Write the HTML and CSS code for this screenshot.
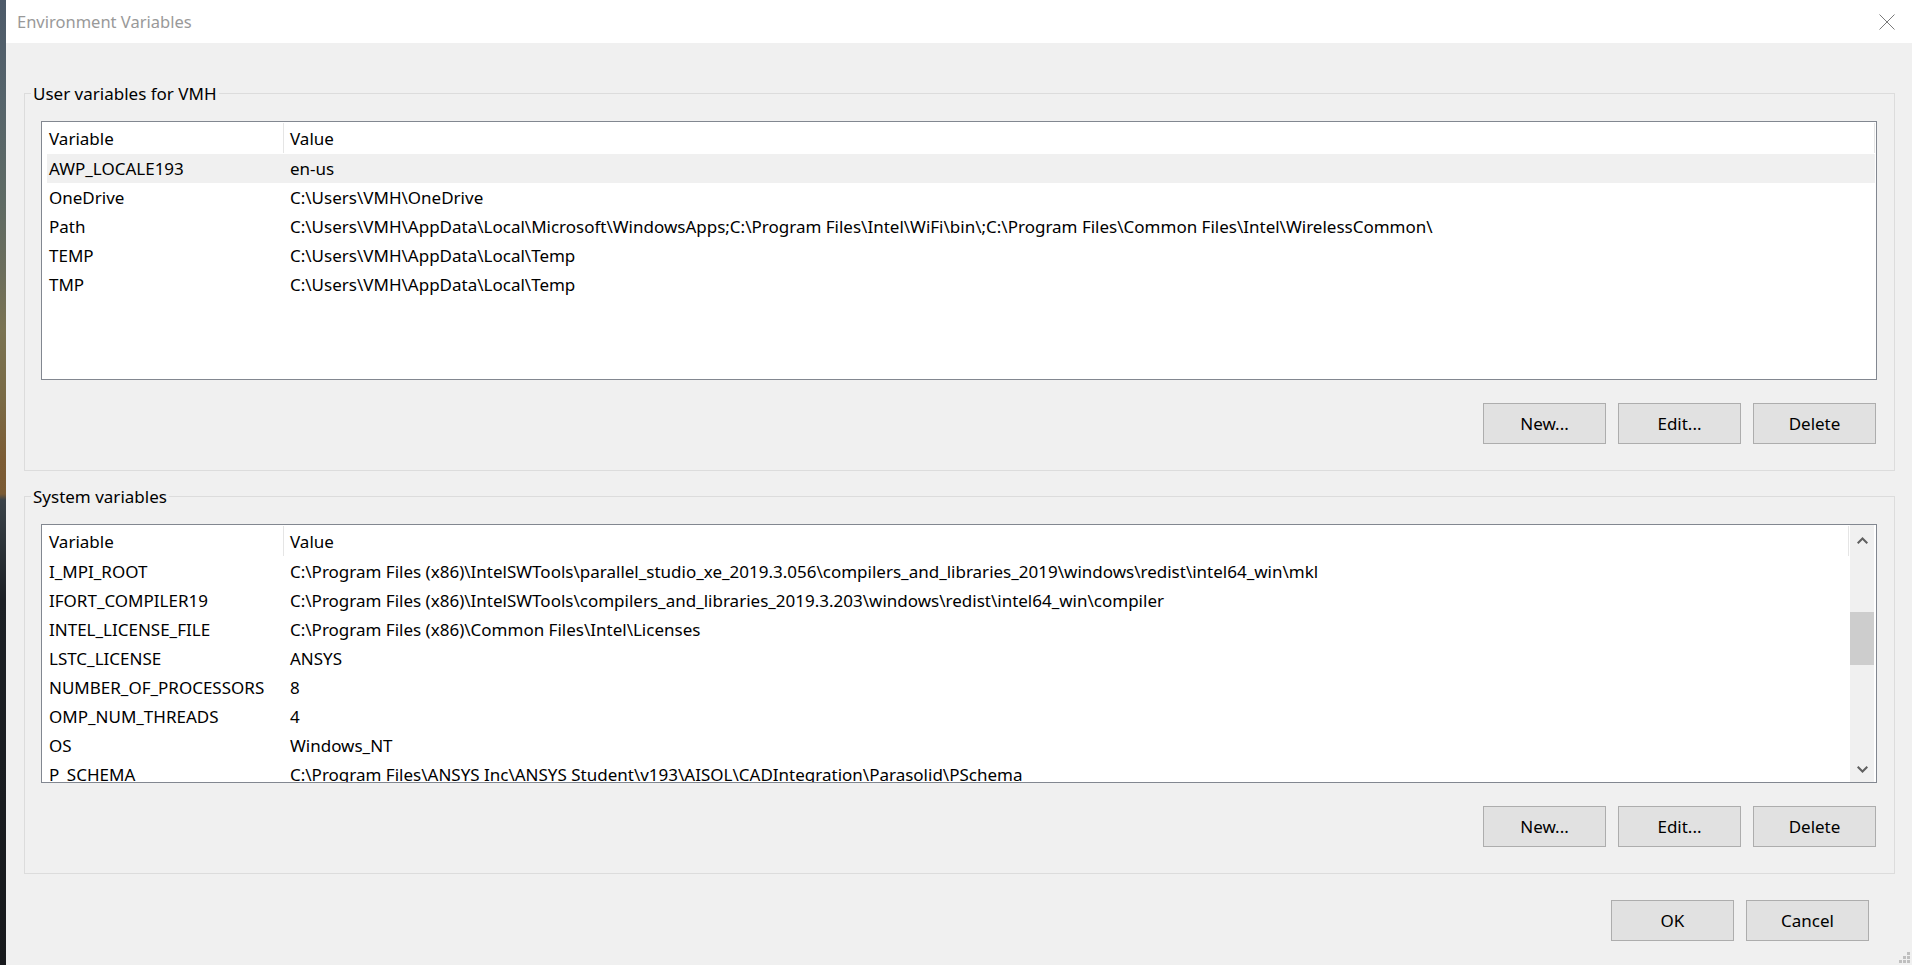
FILE: index.html
```html
<!DOCTYPE html>
<html lang="en">
<head>
  <meta charset="UTF-8" />
  <title>Environment Variables</title>
  <link rel="stylesheet" href="styles.css">
</head>
<body>

  <div class="desktop-edge"></div>

  <div class="dialog">
    <header class="titlebar">
      <span class="title">Environment Variables</span>
      <button class="close" title="Close">
        <svg width="16" height="16" viewBox="0 0 16 16"><path d="M0.5 0.5 L15.5 15.5 M15.5 0.5 L0.5 15.5" stroke="#7a7a7a" stroke-width="1" fill="none"/></svg>
      </button>
    </header>

    <main class="content">

      <section class="group">
        <h2 class="group-label">User variables for VMH</h2>
        <div class="listview">
          <div class="list-main">
            <div class="list-head">
              <div class="cell-name">Variable</div>
              <div class="cell-value">Value</div>
            </div>
            <div class="row selected"><div class="cell-name">AWP_LOCALE193</div><div class="cell-value">en-us</div></div>
            <div class="row"><div class="cell-name">OneDrive</div><div class="cell-value">C:\Users\VMH\OneDrive</div></div>
            <div class="row"><div class="cell-name">Path</div><div class="cell-value">C:\Users\VMH\AppData\Local\Microsoft\WindowsApps;C:\Program Files\Intel\WiFi\bin\;C:\Program Files\Common Files\Intel\WirelessCommon\</div></div>
            <div class="row"><div class="cell-name">TEMP</div><div class="cell-value">C:\Users\VMH\AppData\Local\Temp</div></div>
            <div class="row"><div class="cell-name">TMP</div><div class="cell-value">C:\Users\VMH\AppData\Local\Temp</div></div>
          </div>
        </div>
        <div class="btn-row">
          <button class="btn">New...</button>
          <button class="btn">Edit...</button>
          <button class="btn">Delete</button>
        </div>
      </section>

      <section class="group">
        <h2 class="group-label">System variables</h2>
        <div class="listview">
          <div class="list-main">
            <div class="list-head">
              <div class="cell-name">Variable</div>
              <div class="cell-value">Value</div>
            </div>
            <div class="row"><div class="cell-name">I_MPI_ROOT</div><div class="cell-value">C:\Program Files (x86)\IntelSWTools\parallel_studio_xe_2019.3.056\compilers_and_libraries_2019\windows\redist\intel64_win\mkl</div></div>
            <div class="row"><div class="cell-name">IFORT_COMPILER19</div><div class="cell-value">C:\Program Files (x86)\IntelSWTools\compilers_and_libraries_2019.3.203\windows\redist\intel64_win\compiler</div></div>
            <div class="row"><div class="cell-name">INTEL_LICENSE_FILE</div><div class="cell-value">C:\Program Files (x86)\Common Files\Intel\Licenses</div></div>
            <div class="row"><div class="cell-name">LSTC_LICENSE</div><div class="cell-value">ANSYS</div></div>
            <div class="row"><div class="cell-name">NUMBER_OF_PROCESSORS</div><div class="cell-value">8</div></div>
            <div class="row"><div class="cell-name">OMP_NUM_THREADS</div><div class="cell-value">4</div></div>
            <div class="row"><div class="cell-name">OS</div><div class="cell-value">Windows_NT</div></div>
            <div class="row"><div class="cell-name">P_SCHEMA</div><div class="cell-value">C:\Program Files\ANSYS Inc\ANSYS Student\v193\AISOL\CADIntegration\Parasolid\PSchema</div></div>
          </div>
          <div class="scrollbar">
            <div class="sb-btn sb-up">
              <svg width="11" height="7" viewBox="0 0 11 7"><path d="M0.7 6.3 L5.5 1.5 L10.3 6.3" stroke="#606060" stroke-width="2" fill="none"/></svg>
            </div>
            <div class="sb-track"><div class="sb-thumb"></div></div>
            <div class="sb-btn sb-down">
              <svg width="11" height="7" viewBox="0 0 11 7"><path d="M0.7 0.7 L5.5 5.5 L10.3 0.7" stroke="#606060" stroke-width="2" fill="none"/></svg>
            </div>
          </div>
        </div>
        <div class="btn-row">
          <button class="btn">New...</button>
          <button class="btn">Edit...</button>
          <button class="btn">Delete</button>
        </div>
      </section>

      <div class="dialog-buttons">
        <button class="btn">OK</button>
        <button class="btn">Cancel</button>
      </div>
    </main>

    <svg class="grip" width="11" height="11" viewBox="0 0 11 11">
      <rect x="8" y="0" width="3" height="3" fill="#bfbfbf"/>
      <rect x="4" y="4" width="3" height="3" fill="#bfbfbf"/>
      <rect x="8" y="4" width="3" height="3" fill="#bfbfbf"/>
      <rect x="0" y="8" width="3" height="3" fill="#bfbfbf"/>
      <rect x="4" y="8" width="3" height="3" fill="#bfbfbf"/>
      <rect x="8" y="8" width="3" height="3" fill="#bfbfbf"/>
    </svg>
  </div>

</body>
</html>
```

FILE: styles.css
```css
:root {
  --face: #f0f0f0;
  --group-line: #dcdcdc;
  --list-border: #828790;
  --btn-face: #e1e1e1;
  --btn-border: #adadad;
}

body {
  margin: 0;
  height: 965px;
  overflow: hidden;
  display: flex;
  font-family: 'Noto Sans', 'Segoe UI', sans-serif;
  font-size: 17px;
  color: #000;
  background: var(--face);
}

.desktop-edge {
  width: 6px;
  flex: none;
  background: linear-gradient(to bottom,
    #4d5a69 0px, #56646b 100px, #5e6a64 200px, #6b6d5c 270px,
    #7a7352 330px, #7a6a45 400px, #7c5c35 460px, #7a5a33 494px,
    #3a4248 500px, #2e353b 540px, #1c2025 600px, #17191c 965px);
}

.dialog {
  flex: 1;
  display: flex;
  flex-direction: column;
  position: relative;
  background: var(--face);
}

.titlebar {
  height: 43px;
  flex: none;
  background: #fff;
  display: flex;
  align-items: center;
  justify-content: space-between;
  padding: 0 17px 0 11px;
}

.title {
  color: #999;
  font-size: 16.5px;
}

.close {
  border: 0;
  padding: 0;
  background: none;
  width: 16px;
  height: 16px;
  display: block;
}

.close svg {
  display: block;
}

.content {
  flex: 1;
  display: flex;
  flex-direction: column;
  padding: 0 17px 0 18px;
}

.group {
  margin-top: 50px;
  border: 1px solid var(--group-line);
  padding: 0 17px 26px 16px;
}

.group + .group {
  margin-top: 25px;
}

.group-label {
  margin: -12px 0 0 -10px;
  padding: 0 2px;
  width: fit-content;
  background: var(--face);
  font-size: 17px;
  font-weight: normal;
  line-height: 24px;
}

.listview {
  margin-top: 15px;
  height: 259px;
  box-sizing: border-box;
  border: 1px solid var(--list-border);
  background: #fff;
  display: flex;
}

.list-main {
  flex: 1;
  min-width: 0;
  overflow: hidden;
  padding: 0 1px 0 5px;
}

.list-head,
.row {
  display: flex;
  white-space: nowrap;
}

.list-head {
  height: 32px;
}

.list-head > div {
  margin-top: 1px;
  height: 30px;
  line-height: 32px;
  border-right: 1px solid #e5e5e5;
}

.row {
  height: 29px;
  line-height: 29px;
}

.row.selected {
  background: var(--face);
}

.cell-name {
  width: 237px;
  flex: none;
  box-sizing: border-box;
  padding-left: 2px;
}

.row .cell-name {
  border-right: 1px solid transparent;
}

.cell-value {
  flex: 1;
  padding-left: 6px;
}

.scrollbar {
  width: 24px;
  flex: none;
  margin-right: 2px;
  background: var(--face);
  display: flex;
  flex-direction: column;
}

.sb-btn {
  height: 32px;
  display: flex;
  justify-content: center;
}

.sb-up {
  align-items: flex-start;
  padding-top: 12px;
  box-sizing: border-box;
}

.sb-down {
  align-items: flex-end;
  padding-bottom: 9px;
  box-sizing: border-box;
}

.sb-btn svg {
  display: block;
}

.sb-track {
  flex: 1;
  padding-top: 55px;
}

.sb-thumb {
  height: 53px;
  background: #cdcdcd;
}

.btn-row {
  display: flex;
  justify-content: flex-end;
  gap: 12px;
  margin: 23px 1px 0 0;
}

.btn {
  width: 123px;
  height: 41px;
  box-sizing: border-box;
  padding: 0;
  background: var(--btn-face);
  border: 1px solid var(--btn-border);
  font-family: inherit;
  font-size: 17px;
  color: #000;
}

.dialog-buttons {
  display: flex;
  justify-content: flex-end;
  gap: 12px;
  margin-top: 26px;
  padding-right: 26px;
}

.grip {
  position: absolute;
  right: 2px;
  bottom: 2px;
}
```
